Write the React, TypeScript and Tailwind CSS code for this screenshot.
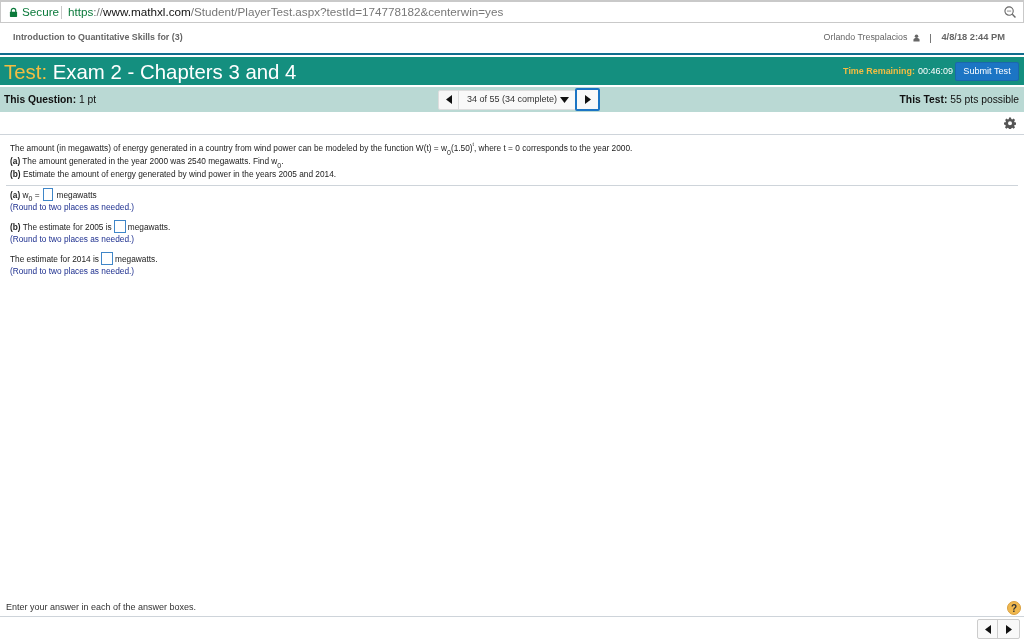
import React from "react";

const Box = ({ w = "w-[12px]" }: { w?: string }) => <span className={`inline-block ${w} h-[13px] mx-[2px] border border-[#3f86c8] bg-white`} />;
const Sub0 = () => <sub className="text-[7px] leading-none align-[-2px]">0</sub>;
const Hint = () => <div className="text-[#1d2f8f]">(Round to two places as needed.)</div>;
const TriL = () => <svg width="6" height="9" viewBox="0 0 6 9"><path d="M6 0v9L0 4.5z" fill="#111" /></svg>;
const TriR = () => <svg width="6" height="9" viewBox="0 0 6 9"><path d="M0 0v9l6-4.500z" fill="#111" /></svg>;
const TriD = () => <svg width="9" height="6" viewBox="0 0 9 6"><path d="M0 0h9L4.5 6z" fill="#111" /></svg>;

export default function App() {
  return (
    <div className="w-[1024px] h-[640px] overflow-hidden bg-white flex flex-col blur-[0.35px] font-['Liberation_Sans',Arial,sans-serif]">
      {/* Browser address bar */}
      <div className="h-[23px] shrink-0 flex items-center pl-[8px] pr-[7px] border border-t-2 border-[#c9c9c9] text-[11.7px] bg-white">
        <svg width="9" height="11" viewBox="0 0 10 11" className="mr-[4px]">
          <path d="M2.500 5V3.400a2.500 2.500 0 0 1 5 0V5" fill="none" stroke="#0b7a3b" strokeWidth="1.3" />
          <rect x="1" y="4.600" width="8" height="6" rx="0.8" fill="#0b7a3b" />
        </svg>
        <span className="text-[#0b7a3b] w-[39px]">Secure</span>
        <span className="w-px h-[13px] bg-[#c8c8c8] mr-[6px]" />
        <span className="whitespace-nowrap">
          <span className="text-[#0b7a3b]">https</span>
          <span className="text-[#777]">://</span>
          <span className="text-[#111]">www.mathxl.com</span>
          <span className="text-[#777]">/Student/PlayerTest.aspx?testId=174778182&amp;centerwin=yes</span>
        </span>
        <svg width="12" height="12" viewBox="0 0 13 13" className="ml-auto">
          <circle cx="5.500" cy="5.500" r="4.500" fill="none" stroke="#666" strokeWidth="1.2" />
          <path d="M9 9l3.400 3.400" stroke="#666" strokeWidth="1.5" />
          <path d="M3.200 5.500h4.600" stroke="#888" strokeWidth="1" />
        </svg>
      </div>

      {/* Course header */}
      <div className="h-[30px] shrink-0 flex items-center pl-[13px] pr-[19px] text-[8.9px] text-[#666]">
        <span className="font-bold">Introduction to Quantitative Skills for (3)</span>
        <span className="ml-auto">Orlando Trespalacios</span>
        <svg width="7" height="8" viewBox="0 0 8 9" className="ml-[6px]">
          <circle cx="4" cy="2.400" r="2" fill="#666" />
          <path d="M0.500 8.500V6.600C0.500 5.300 2 4.600 4 4.600s3.500.7 3.500 2V8.500z" fill="#666" />
        </svg>
        <span className="w-px h-[9px] bg-[#777] ml-[10px] mr-[10px]" />
        <span className="font-bold text-[9.3px]">4/8/18 2:44 PM</span>
      </div>

      {/* Title bar */}
      <div className="shrink-0 h-[2px] bg-[#0f6d8c]" />
      <div className="shrink-0 h-[2px] bg-white" />
      <div className="h-[28px] shrink-0 bg-[#148f7f] flex items-center pl-[4px] pr-[5px]">
        <h1 className="text-[20.4px] leading-none font-normal text-white whitespace-nowrap pt-[2px]">
          <span className="text-[#f4bd42]">Test:</span> Exam 2 - Chapters 3 and 4
        </h1>
        <span className="ml-auto pt-[1px] text-[8.95px] text-[#f4bd42] font-bold">Time Remaining:</span>
        <span className="ml-[3px] pt-[1px] text-[9px] text-white">00:46:09</span>
        <button className="ml-[2px] mt-[1px] w-[64px] h-[19px] rounded-[2px] bg-[#1c75c4] border border-[#1a68ad] text-white text-[9.1px]">Submit Test</button>
      </div>

      {/* Question bar */}
      <div className="shrink-0 h-[2px] bg-white" />
      <div className="h-[25px] shrink-0 bg-[#bad9d4] flex items-center pl-[4px] pr-[5px] text-[10.3px] text-[#111]">
        <div className="w-[434px]"><b>This Question:</b> 1 pt</div>
        <div className="flex items-center">
          <div className="w-[21px] h-[20px] flex items-center justify-center bg-[#f7f7f7] border border-[#ddd] rounded-l-[2px]"><TriL /></div>
          <div className="w-[116px] h-[20px] flex items-center pl-[8px] gap-[3px] bg-[#f9f9f9] border-y border-[#ddd] text-[9px] text-[#333] whitespace-nowrap">
            34 of 55 (34 complete) <TriD />
          </div>
          <div className="w-[25px] h-[23px] flex items-center justify-center bg-[#f9f9f9] border-2 border-[#1c75c4] rounded-[2px]"><TriR /></div>
        </div>
        <div className="ml-auto text-right"><b>This Test:</b> 55 pts possible</div>
      </div>

      {/* Tool row */}
      <div className="h-[23px] shrink-0 flex items-center justify-end pr-[8px] border-b border-[#ced4da]">
        <svg width="12" height="12" viewBox="0 0 24 24">
          <path fill="#555" fillRule="evenodd" d="M10 1h4l.6 3.200 2 .8L19.300 3.200l2.800 2.800-1.800 2.700.8 2 3.200.6v4l-3.200.6-.8 2 1.800 2.700-2.800 2.800-2.700-1.800-2 .8-.6 3.200h-4l-.6-3.200-2-.8-2.700 1.800-2.800-2.800 1.800-2.700-.8-2L0 15.100v-4l3.200-.6.8-2L2.200 5.800 5 3l2.700 1.800 2-.8zM12 8.500a4 4 0 1 0 0 8 4 4 0 0 0 0-8z" />
        </svg>
      </div>

      {/* Question */}
      <div className="flex-1 min-h-0 flex flex-col text-[8.3px] text-[#222] px-[6px]">
        <div className="px-[4px] pt-[7px] pb-[4px] leading-[13px] border-b border-[#ced4da] whitespace-nowrap">
          <div>The amount (in megawatts) of energy generated in a country from wind power can be modeled by the function W(t) = w<Sub0 />(1.50)<sup className="text-[5px] leading-none align-[3px]">t</sup>, where t = 0 corresponds to the year 2000.</div>
          <div><b>(a)</b> The amount generated in the year 2000 was 2540 megawatts. Find w<Sub0 />.</div>
          <div><b>(b)</b> Estimate the amount of energy generated by wind power in the years 2005 and 2014.</div>
        </div>
        <div className="px-[4px] pt-[2px] leading-[12px] whitespace-nowrap">
          <div className="h-[13px] flex items-center"><span><b>(a)</b> w<Sub0 /> =</span><Box w="w-[10px] ml-[3px]" /><span className="ml-[2px]">megawatts</span></div>
          <Hint />
          <div className="h-[13px] flex items-center mt-[7px]"><span><b>(b)</b> The estimate for 2005 is</span><Box /><span>megawatts.</span></div>
          <Hint />
          <div className="h-[13px] flex items-center mt-[7px]"><span>The estimate for 2014 is</span><Box /><span>megawatts.</span></div>
          <Hint />
        </div>
      </div>

      {/* Footer */}
      <div className="h-[17px] shrink-0 flex items-center justify-between pl-[6px] pr-[3px] border-b border-[#ced4da] text-[9px] text-[#333]">
        <span>Enter your answer in each of the answer boxes.</span>
        <span className="w-[14px] h-[14px] rounded-full bg-[#f0b84e] border border-[#d9a040] flex items-center justify-center text-[10px] font-bold text-[#333]">?</span>
      </div>
      <div className="h-[23px] shrink-0 flex items-start justify-end pr-[4px] pt-[2px]">
        <div className="flex h-[20px] border border-[#ccc] rounded-[2px] bg-[#f9f9f9]">
          <div className="w-[20px] flex items-center justify-center border-r border-[#ccc]"><TriL /></div>
          <div className="w-[21px] flex items-center justify-center"><TriR /></div>
        </div>
      </div>
    </div>
  );
}
